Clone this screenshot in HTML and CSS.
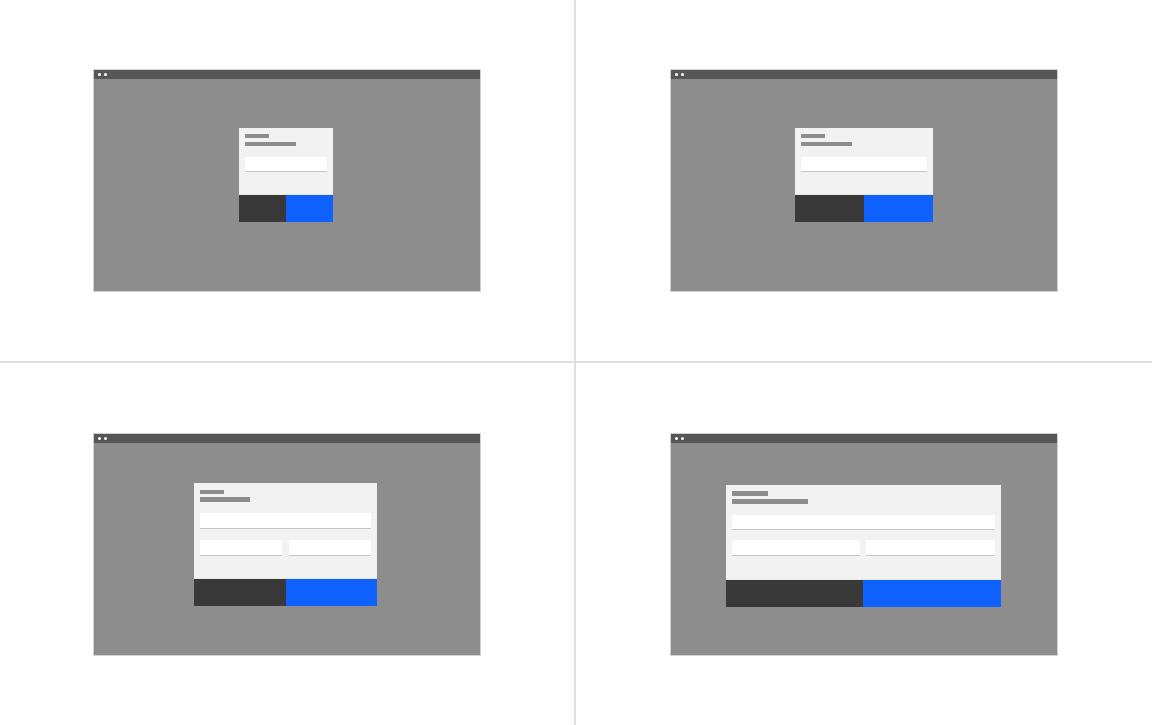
FILE: index.html
```html
<!DOCTYPE html>
<html lang="en">
<head>
<meta charset="utf-8">
<title>Modal sizes</title>
<link rel="stylesheet" href="styles.css">
</head>
<body>
<div class="page">
  <div class="cell">
    <div class="window">
      <div class="titlebar"><span class="dot"></span><span class="dot"></span></div>
      <div class="screen screen-sm">
        <div class="dialog dialog-xs">
          <div class="dialog-body">
            <div class="label label-a"></div>
            <div class="label label-b"></div>
            <div class="field"></div>
          </div>
          <div class="footer"><div class="btn btn-secondary"></div><div class="btn btn-primary"></div></div>
        </div>
      </div>
    </div>
  </div>
  <div class="cell">
    <div class="window">
      <div class="titlebar"><span class="dot"></span><span class="dot"></span></div>
      <div class="screen screen-sm">
        <div class="dialog dialog-sm">
          <div class="dialog-body">
            <div class="label label-a"></div>
            <div class="label label-b"></div>
            <div class="field"></div>
          </div>
          <div class="footer"><div class="btn btn-secondary"></div><div class="btn btn-primary"></div></div>
        </div>
      </div>
    </div>
  </div>
  <div class="cell">
    <div class="window">
      <div class="titlebar"><span class="dot"></span><span class="dot"></span></div>
      <div class="screen screen-md">
        <div class="dialog dialog-md">
          <div class="dialog-body">
            <div class="label label-a"></div>
            <div class="label label-b"></div>
            <div class="field"></div>
            <div class="field-row"><div class="field"></div><div class="field"></div></div>
          </div>
          <div class="footer"><div class="btn btn-secondary"></div><div class="btn btn-primary"></div></div>
        </div>
      </div>
    </div>
  </div>
  <div class="cell">
    <div class="window">
      <div class="titlebar"><span class="dot"></span><span class="dot"></span></div>
      <div class="screen screen-lg">
        <div class="dialog dialog-lg">
          <div class="dialog-body">
            <div class="label label-a"></div>
            <div class="label label-b"></div>
            <div class="field"></div>
            <div class="field-row"><div class="field"></div><div class="field"></div></div>
          </div>
          <div class="footer"><div class="btn btn-secondary"></div><div class="btn btn-primary"></div></div>
        </div>
      </div>
    </div>
  </div>
</div>
</body>
</html>
```

FILE: styles.css
```css
*, *::before, *::after {
  box-sizing: border-box;
}

html, body {
  margin: 0;
  padding: 0;
  background: #ffffff;
  font-family: "Liberation Sans", Arial, sans-serif;
}

.page {
  width: 1152px;
  height: 725px;
  display: grid;
  grid-template-columns: 574px 576px;
  grid-template-rows: 361px 362px;
  gap: 2px;
  background: #e0e0e0;
}

.cell {
  background: #ffffff;
  display: flex;
  align-items: center;
  justify-content: center;
}

.window {
  width: 386px;
  height: 221px;
  display: flex;
  flex-direction: column;
  background: #8d8d8d;
  box-shadow: 0 0 0 1px #d2d2d2;
}

.titlebar {
  height: 9px;
  flex: none;
  background: #565656;
  display: flex;
  align-items: center;
  gap: 3px;
  padding-left: 4px;
}

.dot {
  width: 3px;
  height: 3px;
  border-radius: 50%;
  background: #ffffff;
}

.screen {
  flex: 1;
  display: flex;
  justify-content: center;
  align-items: flex-start;
}

.screen-sm { padding-top: 49px; }
.screen-md { padding-top: 40px; }
.screen-lg { padding-top: 42px; }

.dialog {
  display: flex;
  flex-direction: column;
  background: #f2f2f2;
}

.dialog-xs { width: 94px; margin-right: 2px; }
.dialog-sm { width: 138px; }
.dialog-md { width: 183px; margin-right: 3px; }
.dialog-lg { width: 275px; margin-right: 2px; }

.dialog-body {
  padding: 6px 6px 0;
  display: flex;
  flex-direction: column;
}

.dialog-xs .dialog-body,
.dialog-sm .dialog-body { height: 66px; }
.dialog-md .dialog-body { height: 95px; padding-top: 7px; }
.dialog-lg .dialog-body { height: 94px; }

.label {
  height: 4px;
  flex: none;
  background: #8d8d8d;
}

.label-a { width: 24px; }
.label-b { width: 51px; margin-top: 4px; }

.dialog-md .label-b { width: 50px; height: 5px; margin-top: 3px; }
.dialog-lg .label { height: 5px; }
.dialog-lg .label-a { width: 36px; }
.dialog-lg .label-b { width: 76px; margin-top: 3px; }

.field {
  height: 15px;
  flex: none;
  background: #ffffff;
  border-bottom: 1px solid #c6c6c6;
  margin-top: 11px;
}

.dialog-md .field { height: 16px; }
.dialog-lg .field { height: 16px; }
.dialog-lg > .dialog-body > .field { height: 15px; }

.field-row {
  display: flex;
  gap: 7px;
  margin-top: 11px;
}

.dialog-lg .field-row { gap: 6px; margin-top: 10px; }

.field-row .field {
  flex: 1;
  margin-top: 0;
}

.footer {
  display: flex;
  height: 28px;
  border-top: 1px solid #e8e8e8;
}

.btn { flex: 1; }
.btn-secondary { background: #393939; }
.btn-primary { background: #0f62fe; }
```
